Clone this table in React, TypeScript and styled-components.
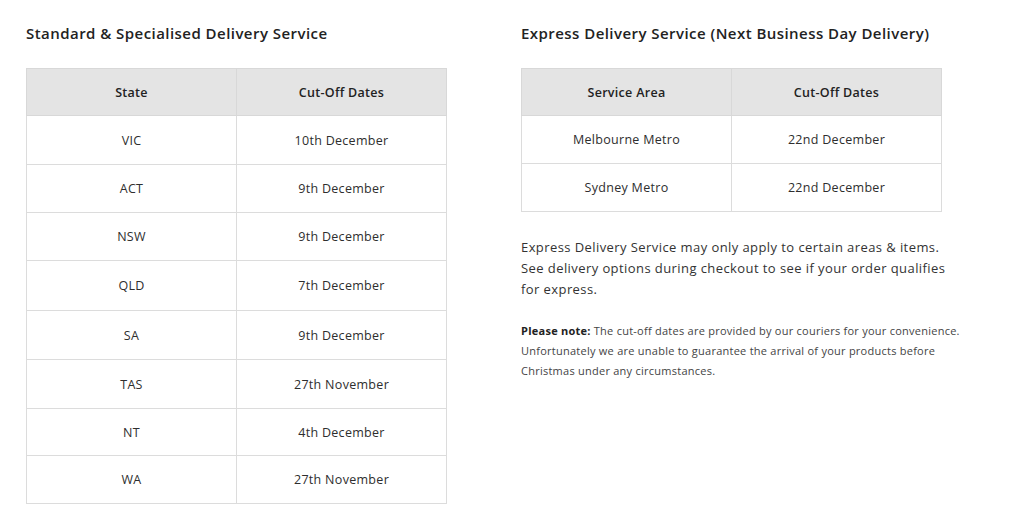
import React from "react";
import styled, { createGlobalStyle } from "styled-components";

const Global = createGlobalStyle`
  html, body { margin: 0; padding: 0; background: #fff; }
  body { font-family: "Open Sans", "Liberation Sans", sans-serif; color: #333; }
`;

const Page = styled.div`
  display: grid;
  grid-template-columns: 421px 450px;
  column-gap: 74px;
  padding: 24px 0 0 26px;
`;

const Column = styled.section`
  display: flex;
  flex-direction: column;
`;

const Heading = styled.h2`
  margin: 0 0 25px;
  font-size: 15px;
  line-height: 19px;
  font-weight: 600;
  color: #222;
  letter-spacing: 0.45px;
  white-space: nowrap;
`;

const Table = styled.table`
  width: 421px;
  border-collapse: collapse;
  table-layout: fixed;
  font-size: 12.5px;
  letter-spacing: 0.3px;
`;

const Th = styled.th`
  height: 46px;
  padding: 0;
  background: #e4e4e4;
  border: 1px solid #d8d8d8;
  font-weight: 600;
  color: #222;
  text-align: center;
`;

const Td = styled.td<{ $h?: number }>`
  height: ${(p) => p.$h ?? 47}px;
  padding: 0;
  border: 1px solid #dcdcdc;
  text-align: center;
  color: #2e2e2e;
`;

const Para = styled.p`
  margin: 25px 0 0;
  font-size: 13px;
  line-height: 21px;
  letter-spacing: 0.42px;
  color: #333;
  white-space: nowrap;
`;

const Note = styled.p`
  margin: 21px 0 0;
  font-size: 11px;
  line-height: 20px;
  letter-spacing: 0.25px;
  color: #444;
  white-space: nowrap;
  strong { font-weight: 700; color: #222; }
`;

const standard: [string, string, number][] = [
  ["VIC", "10th December", 48],
  ["ACT", "9th December", 47],
  ["NSW", "9th December", 47],
  ["QLD", "7th December", 49],
  ["SA", "9th December", 48],
  ["TAS", "27th November", 48],
  ["NT", "4th December", 46],
  ["WA", "27th November", 47],
];

const express: [string, string][] = [
  ["Melbourne Metro", "22nd December"],
  ["Sydney Metro", "22nd December"],
];

export default function App() {
  return (
    <>
      <Global />
      <Page>
        <Column>
          <Heading>Standard &amp; Specialised Delivery Service</Heading>
          <Table>
            <thead>
              <tr>
                <Th>State</Th>
                <Th>Cut-Off Dates</Th>
              </tr>
            </thead>
            <tbody>
              {standard.map(([s, d, h]) => (
                <tr key={s}>
                  <Td $h={h}>{s}</Td>
                  <Td $h={h}>{d}</Td>
                </tr>
              ))}
            </tbody>
          </Table>
        </Column>
        <Column>
          <Heading>Express Delivery Service (Next Business Day Delivery)</Heading>
          <Table>
            <thead>
              <tr>
                <Th>Service Area</Th>
                <Th>Cut-Off Dates</Th>
              </tr>
            </thead>
            <tbody>
              {express.map(([s, d]) => (
                <tr key={s}>
                  <Td>{s}</Td>
                  <Td>{d}</Td>
                </tr>
              ))}
            </tbody>
          </Table>
          <Para>
            Express Delivery Service may only apply to certain areas &amp; items.
            <br />
            See delivery options during checkout to see if your order qualifies
            <br />
            for express.
          </Para>
          <Note>
            <strong>Please note:</strong> The cut-off dates are provided by our couriers for your convenience.
            <br />
            Unfortunately we are unable to guarantee the arrival of your products before
            <br />
            Christmas under any circumstances.
          </Note>
        </Column>
      </Page>
    </>
  );
}
